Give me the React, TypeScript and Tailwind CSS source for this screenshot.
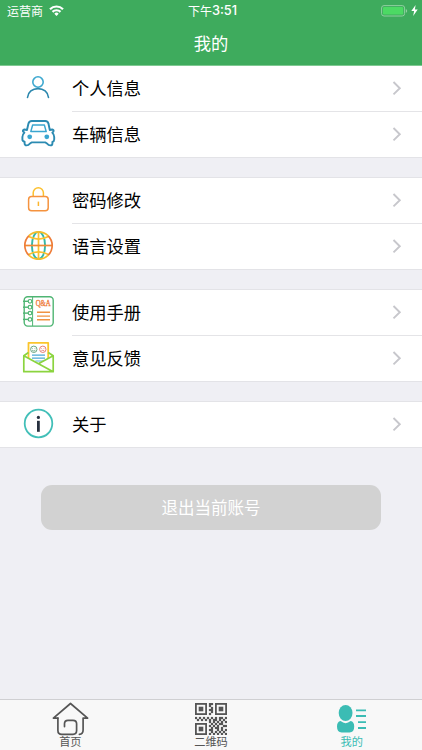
import { Fragment } from 'react';
import type { ReactNode } from 'react';

interface MenuItem {
  label: string;
  icon: ReactNode;
}

function PersonIcon() {
  return (
    <svg width="36" height="35" viewBox="0 0 36 35" fill="none" strokeWidth="1.6" strokeLinecap="round">
      <circle cx="18" cy="11" r="5.2" stroke="#3fa9d0" />
      <path d="M7.5 26.5C8 21 12.5 17.6 18 17.6S28 21 28.5 26.5" stroke="#2b87ad" />
    </svg>
  );
}

function CarIcon() {
  return (
    <svg width="36" height="35" viewBox="0 0 36 35" fill="none" stroke="#2c8bb2" strokeWidth="1.9" strokeLinejoin="round">
      <path d="M11.8 4H25.2Q28 4 28.5 6.8L29.8 13L32.2 12.5Q34.2 13 33.4 14.6L32.3 15.6Q34.2 17.6 34.2 20V22.5Q34.2 24.3 32.4 24.8V26.5Q32.4 28.4 30.3 28.4Q28.4 28.4 27.3 26.7L25.5 25.4H11.5L9.7 26.7Q8.6 28.4 6.6 28.4Q4.7 28.4 4.6 26.5V24.8Q2.4 24.3 2.4 22.5V20Q2.4 17.6 4.4 15.6L3 14.6Q2.6 13 4.4 12.5L7 13L8.4 6.8Q9 4 11.8 4Z" />
      <path d="M12.6 8.1H24.4L26.2 14.6H10.8Z" stroke="#3aa6d0" strokeWidth="1.5" />
      <circle cx="9.7" cy="19.8" r="2.4" fill="#3aa6d0" stroke="none" />
      <circle cx="26.8" cy="19.8" r="2.4" fill="#3aa6d0" stroke="none" />
    </svg>
  );
}

function LockIcon() {
  return (
    <svg width="36" height="35" viewBox="0 0 36 35" fill="none" strokeWidth="1.5">
      <path d="M13.2 13.5V9.8A5.1 5.1 0 0 1 23.4 9.8V13.5" stroke="#fcc02e" />
      <rect x="8.6" y="13.6" width="19.6" height="14.2" rx="3" stroke="#f5933f" />
      <path d="M18.4 18.6V23" stroke="#fcb62e" />
    </svg>
  );
}

function GlobeIcon() {
  return (
    <svg width="36" height="35" viewBox="0 0 36 35" fill="none" strokeWidth="1.7">
      <ellipse cx="18.5" cy="16.5" rx="6.6" ry="13.6" stroke="#35b8a6" strokeWidth="1.9" />
      <path d="M18.5 3V30" stroke="#fbc02d" />
      <path d="M8.6 7.6Q18.5 12.8 28.4 7.6M8.6 25.4Q18.5 20.2 28.4 25.4" stroke="#fbc02d" />
      <path d="M4.5 16.5H32.5" stroke="#f08a35" />
      <path d="M9 6.6A13.8 13.8 0 0 0 9 26.4M28 6.6A13.8 13.8 0 0 1 28 26.4" stroke="#ee7d39" />
      <path d="M9 6.6A13.8 13.8 0 0 1 28 6.6M9 26.4A13.8 13.8 0 0 0 28 26.4" stroke="#f5bd2b" />
    </svg>
  );
}

function ManualIcon() {
  return (
    <svg width="36" height="35" viewBox="0 0 36 35" fill="none" stroke="#4fb573" strokeWidth="1.4">
      <rect x="4.2" y="1.7" width="29" height="29.4" rx="3.5" />
      <path d="M12.6 1.7V31" strokeWidth="1" />
      {[6.3, 12.2, 18.1, 24.4].map((y) => (
        <g key={y}>
          <path d={`M3 ${y}H8.4`} />
          <circle cx="10" cy={y} r="1.8" fill="#fff" strokeWidth="1.2" />
        </g>
      ))}
      <text x="15.7" y="11.2" fill="#ee7d3c" stroke="#ee7d3c" strokeWidth="0.35" fontSize="8.4" textLength="15" lengthAdjust="spacingAndGlyphs" fontFamily="Liberation Serif, serif">Q&amp;A</text>
      <path d="M17 17.3H30M17 21.1H30M17 24.8H30" stroke="#f09343" strokeWidth="1.4" />
    </svg>
  );
}

function FeedbackIcon() {
  return (
    <svg width="36" height="35" viewBox="0 0 36 35" fill="none" strokeWidth="1.4" strokeLinejoin="round">
      <path d="M8.5 17V1.8H28.2V17" stroke="#fbc52c" strokeWidth="1.8" />
      <circle cx="13.8" cy="8.3" r="3.2" stroke="#5b9d74" strokeWidth="0.9" />
      <circle cx="22.8" cy="8.3" r="3.2" stroke="#e57068" strokeWidth="0.9" />
      <path d="M12.3 7.6H13M14.6 7.6H15.3M12.2 9.3Q13.8 10.8 15.4 9.3" stroke="#5b9d74" strokeWidth="0.8" />
      <path d="M21.3 7.6H22M23.6 7.6H24.3M21.3 9.9Q22.8 8.6 24.3 9.9" stroke="#e57068" strokeWidth="0.8" />
      <path d="M12 14.1H25M12 17.2H25" stroke="#4ba9d6" strokeWidth="1.3" />
      <path d="M15.3 20H23.5" stroke="#4ba9d6" strokeWidth="0.9" />
      <path d="M8.5 11.5L3.8 14.7V30.7H33.2V14.7L28.2 11.5M3.8 14.7L33.2 30.7M18.8 22.6L33.2 14.7" stroke="#8bd43f" strokeWidth="1.7" />
    </svg>
  );
}

function AboutIcon() {
  return (
    <svg width="36" height="35" viewBox="0 0 36 35" fill="none">
      <circle cx="18.5" cy="16.5" r="13.8" stroke="#42bfb8" strokeWidth="1.8" />
      <circle cx="18.4" cy="10.4" r="1.6" fill="#27303f" />
      <path d="M18.4 13.8V24.8" stroke="#27303f" strokeWidth="2.8" />
    </svg>
  );
}

const GROUPS: MenuItem[][] = [
  [
    { label: '个人信息', icon: <PersonIcon /> },
    { label: '车辆信息', icon: <CarIcon /> },
  ],
  [
    { label: '密码修改', icon: <LockIcon /> },
    { label: '语言设置', icon: <GlobeIcon /> },
  ],
  [
    { label: '使用手册', icon: <ManualIcon /> },
    { label: '意见反馈', icon: <FeedbackIcon /> },
  ],
  [{ label: '关于', icon: <AboutIcon /> }],
];

function MenuRow({ label, icon }: MenuItem) {
  return (
    <div className="flex h-[45px] items-center pr-5 pl-5">
      {icon}
      <span className="ml-4 flex-1 pb-[2px] text-[17.3px] leading-none text-black">{label}</span>
      <svg className="mb-[2px]" width="10" height="16" viewBox="0 0 10 16" fill="none" stroke="#c7c7cc" strokeWidth="1.9">
        <path d="M1.5 2L7.8 8.2L1.5 14.4" />
      </svg>
    </div>
  );
}

function StatusBar() {
  return (
    <div className="flex h-[22px] items-center justify-between pr-1 pl-[7px] text-[12px] leading-none">
      <div className="flex flex-1 items-center gap-[6px]">
        <span>运营商</span>
        <svg className="mb-[2px]" width="15" height="11" viewBox="0 0 15 11" fill="none" stroke="#fff" strokeWidth="2.2">
          <path d="M1 4.2A9.2 9.2 0 0 1 14 4.2" />
          <path d="M3.5 6.9A5.7 5.7 0 0 1 11.5 6.9" />
          <path d="M7.5 10.9L5.3 8.7A3.1 3.1 0 0 1 9.7 8.7Z" fill="#fff" stroke="none" />
        </svg>
      </div>
      <span className="flex items-center">
        下午<span className="font-['Inter'] text-[12.8px] font-medium">3:51</span>
      </span>
      <div className="flex flex-1 items-center justify-end gap-[3px]">
        <svg className="mb-px" width="27" height="12" viewBox="0 0 27 12" fill="none">
          <rect x="0.6" y="0.6" width="23" height="10.4" rx="2.4" stroke="#8fcf9f" strokeWidth="1" />
          <rect x="2" y="2" width="20.2" height="7.6" rx="1.2" fill="#4cd964" />
          <path d="M24.8 4V7.8Q26.2 7.2 26.2 5.9T24.8 4Z" fill="#8fcf9f" />
        </svg>
        <svg className="mb-px" width="7" height="11" viewBox="0 0 7 11" fill="#fff">
          <path d="M4.6 0L0.3 6H3.1L2.2 11L6.7 4.6H3.9Z" />
        </svg>
      </div>
    </div>
  );
}

function HomeIcon() {
  return (
    <svg width="37" height="34" viewBox="0 0 37 34" fill="none" stroke="#555" strokeWidth="1.7" strokeLinecap="round" strokeLinejoin="round">
      <path d="M5.9 16.1H1.4L18.5 1.5L35.6 16.1H31.1V28Q31.1 32.3 27.4 32.3" />
      <path d="M5.9 16.1V28.4Q5.9 32.3 9.8 32.3H21Q24.6 32.3 24.6 28.6V21.8Q24.6 18.3 21 18.3H16Q12.5 18.3 12.5 21.8V24.6" />
    </svg>
  );
}

// 16x16 modules, finder squares are drawn separately
const QR_MODULES = [
  '.......##.......',
  '.......#........',
  '........#.......',
  '.......##.......',
  '........#.......',
  '.......#........',
  '................',
  '#.#.#.#.#.#.##.#',
  '.#.#.#.#.##.#.#.',
  '.......#.#.#.#.#',
  '........#.#.##..',
  '.......#.#.#..##',
  '........#.##.#..',
  '.......##..#.#.#',
  '........#.#.#.#.',
  '.......#.#.#.#.#',
];

const QR_FINDERS = [
  [0, 0],
  [20, 0],
  [0, 20],
];

function QrIcon() {
  return (
    <svg width="32" height="32" viewBox="0 0 32 32" fill="#555">
      {QR_MODULES.map((line, y) =>
        line.split('').map((c, x) => c === '#' && <rect key={`${x}-${y}`} x={x * 2 - 0.1} y={y * 2 - 0.1} width="2.2" height="2.2" />),
      )}
      {QR_FINDERS.map(([x, y]) => (
        <g key={`${x}-${y}`}>
          <rect x={x + 0.9} y={y + 0.9} width="10.2" height="10.2" fill="none" stroke="#555" strokeWidth="1.8" />
          <rect x={x + 3.7} y={y + 3.7} width="4.6" height="4.6" />
        </g>
      ))}
    </svg>
  );
}

function MineIcon() {
  return (
    <svg width="30" height="28" viewBox="0 0 30 28" fill="#3bbcb4">
      <ellipse cx="8.6" cy="8" rx="6.9" ry="8" />
      <path d="M3.6 16.1Q8.6 20.2 13.6 16.1Q17.2 16.8 17.2 21.5Q17.2 27.4 12.5 27.4H4.7Q0 27.4 0 21.5Q0 16.8 3.6 16.1Z" />
      <path d="M19 4.4H29V6.3H19ZM19 10H29V11.9H19ZM21 16.2H29V18.1H21ZM21 22H29V23.9H21Z" />
    </svg>
  );
}

export default function App() {
  return (
    <div className="flex h-[750px] w-[422px] flex-col overflow-hidden bg-[#efeff4] font-['Noto_Sans_CJK_SC',sans-serif]">
      <header className="h-[66px] shrink-0 border-b border-[#7fc992] bg-[#3eab5d] text-white">
        <StatusBar />
        <h1 className="flex h-[41px] items-center justify-center text-[17.3px] leading-none">我的</h1>
      </header>

      <main className="flex-1">
        {GROUPS.map((group) => (
          <Fragment key={group[0].label}>
            <section className="bg-white">
              {group.map((item, i) => (
                <Fragment key={item.label}>
                  {i > 0 && <div className="ml-[72px] h-px bg-[#e4e4e7]" />}
                  <MenuRow {...item} />
                </Fragment>
              ))}
            </section>
            {group.length > 1 && <div className="h-[21px] border-y border-[#e3e3e7]" />}
          </Fragment>
        ))}
        <div className="border-t border-[#e3e3e7] px-[41px] pt-[37px]">
          <button className="flex h-[45px] w-full items-center justify-center rounded-[11px] bg-[#d2d2d2] text-[16.5px] leading-none text-white">
            退出当前账号
          </button>
        </div>
      </main>

      <nav className="grid h-[51px] shrink-0 grid-cols-3 border-t border-[#cfcfd2] bg-[#f8f8f8] text-[11.2px] leading-none text-[#555]">
        <div className="flex flex-col items-center pt-[2px]">
          <HomeIcon />
          <span>首页</span>
        </div>
        <div className="flex flex-col items-center pt-[3px]">
          <QrIcon />
          <span className="mt-px">二维码</span>
        </div>
        <div className="flex flex-col items-center pt-[5px] text-[#3bbcb4]">
          <MineIcon />
          <span className="mt-[3px]">我的</span>
        </div>
      </nav>
    </div>
  );
}
